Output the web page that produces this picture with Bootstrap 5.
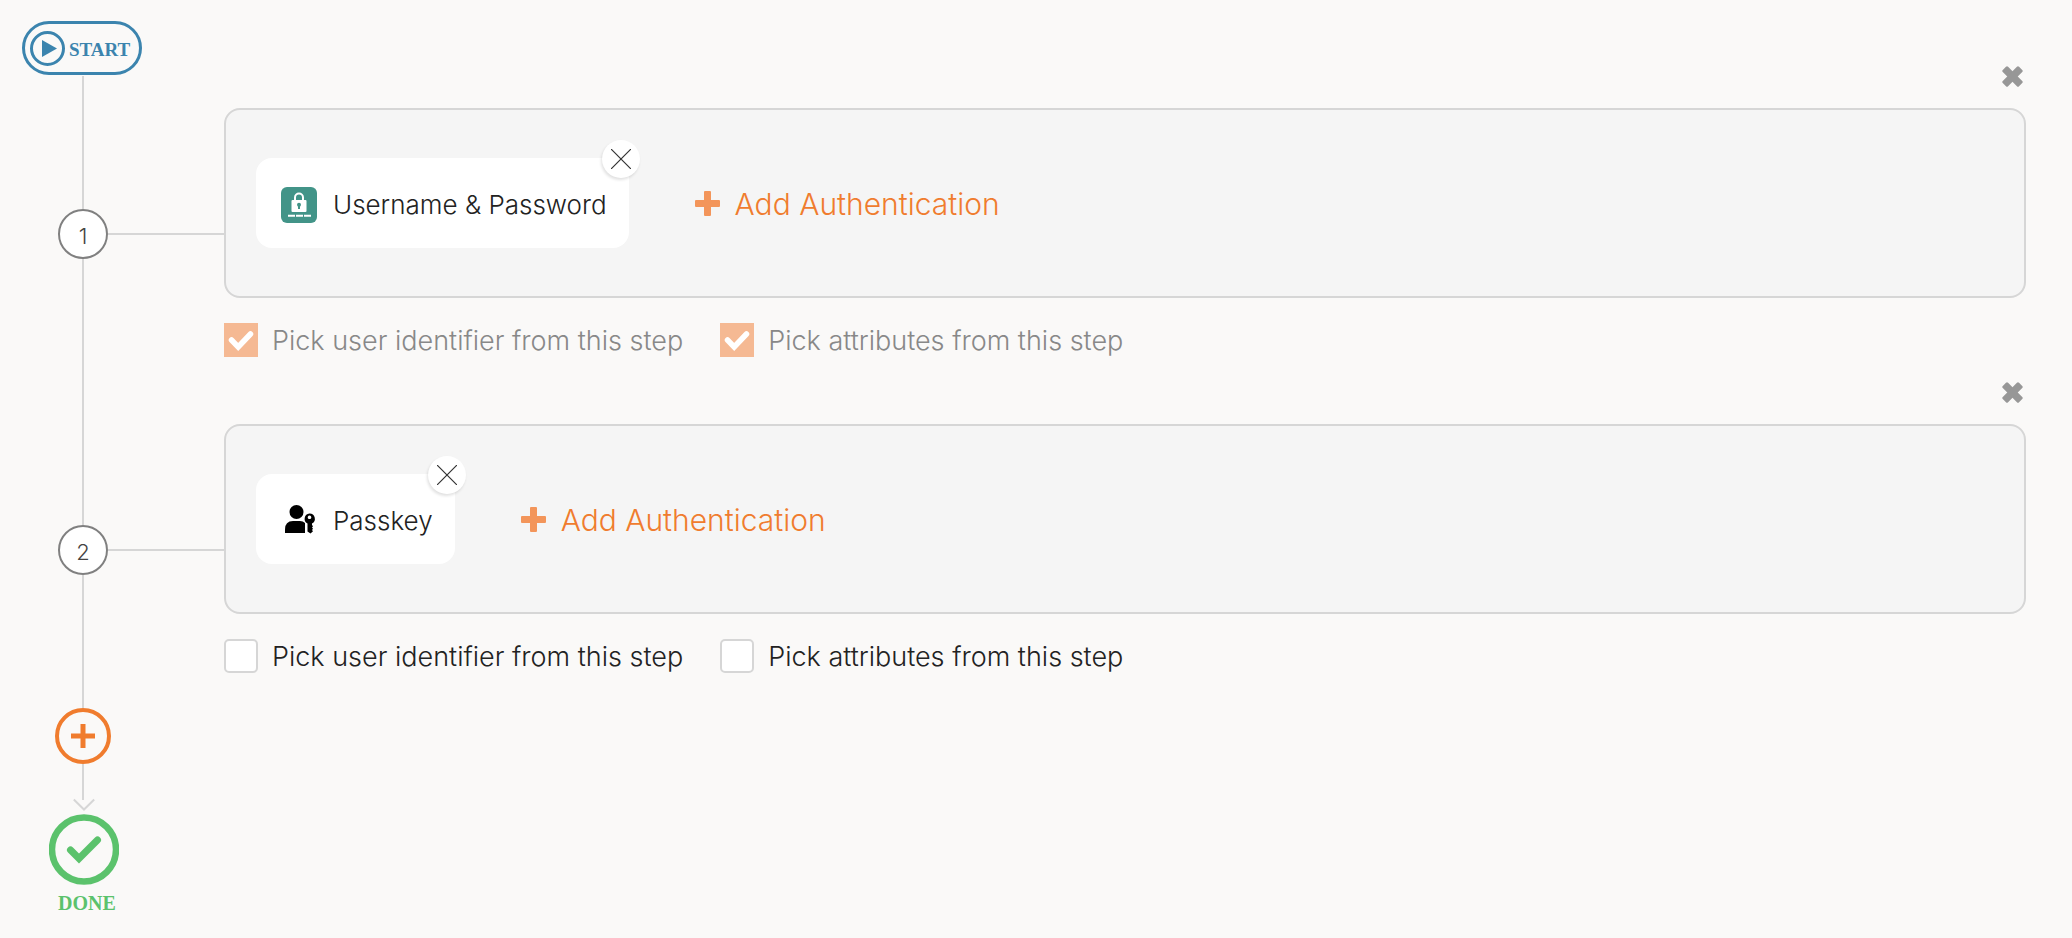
<!DOCTYPE html>
<html lang="en">
<head>
<meta charset="utf-8">
<meta name="viewport" content="width=device-width, initial-scale=1">
<title>Authentication flow</title>
<link href="https://cdn.jsdelivr.net/npm/bootstrap@5.3.0/dist/css/bootstrap.min.css" rel="stylesheet">
<style>
  :root { --line: #d6d6d6; --accent: #f07c2e; --page: #faf9f8; }
  body { background: var(--page); color: #222; font-family: Inter, "Liberation Sans", sans-serif; font-weight: 300; font-size: 26px; line-height: 34px; }
  svg { display: block; }
  .flow { padding: 21px 46px 24px 0; }
  .rail { width: 224px; flex: none; }
  .v-line { width: 2px; margin-left: 82px; background: var(--line); }
  .v-first { height: 133px; margin-top: 1px; }
  .v-lead { height: 143px; }
  .v-short { height: 10px; }
  .v-last { height: 36px; }
  .h-line { height: 2px; background: var(--line); }
  .start-pill { width: 120px; height: 54px; margin-left: 22px; padding-left: 5px; gap: 4px; border: 3px solid #3b84ae; border-radius: 27px; color: #3b84ae; }
  .serif-cap { font-family: "Liberation Serif", serif; font-weight: 700; line-height: 24px; }
  .start-cap { font-size: 19px; padding-top: 3px; }
  .done-cap { font-size: 20px; color: #5bc26c; margin: 6px 0 0 58px; }
  .node-row { padding-left: 58px; }
  .node { width: 50px; height: 50px; border: 2px solid #808080; background: #fff; color: #444; font-size: 22px; padding-top: 3px; }
  .first-content { padding-top: 45px; }
  .step-content { padding-bottom: 25px; }
  .bare { border: 0; padding: 0; background: none; }
  .remove-step { color: #979797; margin: 0 3px 21px 0; }
  .auth-box { height: 190px; padding: 0 30px; gap: 66px; border: 2px solid var(--line); border-radius: 16px; background: #f5f5f5; }
  .chip { height: 90px; padding: 4px 22px 0 25px; gap: 16px; border-radius: 16px; background: #fff; }
  .chip-close { top: -18px; right: -11px; width: 38px; height: 38px; background: #fff; box-shadow: -1px 2px 3px rgba(0,0,0,.12); }
  .add-auth { color: var(--accent); font-size: 30px; font-weight: 300; gap: 15px; }
  .add-auth span, .checks span { padding-top: 2px; }
  .checks { height: 34px; margin-top: 25px; gap: 37px; }
  .checks label { gap: 14px; font-size: 27px; }
  .checks .form-check-input { width: 34px; height: 34px; margin: 0; border: 2px solid var(--line); border-radius: 5px; background-color: #fff; }
  .checks .form-check-input:disabled, .checks .form-check-input:disabled ~ span { opacity: 1; }
  .checks .form-check-input:checked { border: 0; border-radius: 0; background-color: #f5b993; background-size: 34px 34px;
    background-image: url("data:image/svg+xml,%3Csvg xmlns='http://www.w3.org/2000/svg' viewBox='0 0 34 34'%3E%3Cpath d='M7.5 17l6.700 7L26.500 11' fill='none' stroke='%23fff' stroke-width='5.500' stroke-linejoin='miter' stroke-linecap='round'/%3E%3C/svg%3E"); }
  .is-locked { color: #888; }
  .add-step { margin-left: 55px; }
  .arrow-head { margin: -2px 0 2px 73px; }
  .done-mark { margin-left: 49px; }
</style>
</head>
<body>
<main class="flow">
  <section class="d-flex">
    <div class="rail d-flex flex-column">
      <div class="start-pill d-flex align-items-center">
        <svg width="35" height="35" viewBox="0 0 35 35" aria-hidden="true"><circle cx="17.500" cy="17.500" r="16" fill="none" stroke="currentColor" stroke-width="3"/><path d="M12 9l15 8.500L12 26z" fill="currentColor"/></svg>
        <span class="serif-cap start-cap">START</span>
      </div>
      <div class="v-line v-first"></div>
      <div class="node-row d-flex align-items-center">
        <div class="node rounded-circle d-flex align-items-center justify-content-center">1</div>
        <div class="h-line flex-grow-1"></div>
      </div>
      <div class="v-line flex-grow-1"></div>
    </div>
    <div class="first-content step-content flex-grow-1 d-flex flex-column">
      <button type="button" class="bare remove-step align-self-end" aria-label="Remove step 1">
        <svg width="21" height="21" viewBox="0 0 21 21"><g transform="rotate(45 10.500 10.500)" fill="currentColor"><rect x="-1" y="6.750" width="23" height="7.500" rx="1.500"/><rect x="6.750" y="-1" width="7.500" height="23" rx="1.500"/></g></svg>
      </button>
      <div class="auth-box d-flex align-items-center">
        <div class="chip position-relative d-flex align-items-center">
          <svg width="36" height="36" viewBox="0 0 36 36" aria-hidden="true"><rect width="36" height="36" rx="6" fill="#429488"/><path d="M14 14v-3.500a4 4 0 0 1 8 0V14" fill="none" stroke="#fff" stroke-width="2"/><rect x="10.500" y="13" width="15" height="12" rx="1" fill="#fff"/><circle cx="18" cy="17.800" r="2" fill="#429488"/><path d="M17 18h2v4h-2z" fill="#429488"/><path d="M7 28.700h7M15 28.700h7M23 28.700h7" stroke="#fff" stroke-width="2"/></svg>
          <span>Username &amp; Password</span>
          <button type="button" class="bare chip-close position-absolute rounded-circle d-flex align-items-center justify-content-center" aria-label="Remove Username &amp; Password">
            <svg width="20" height="20" viewBox="0 0 20 20"><path d="M0 0l20 20M20 0L0 20" stroke="#333" stroke-width="1.200"/></svg>
          </button>
        </div>
        <button type="button" class="bare add-auth d-flex align-items-center">
          <svg width="25" height="25" viewBox="0 0 25 25" aria-hidden="true"><path d="M10 0h5q1 0 1 1v8h8q1 0 1 1v5q0 1-1 1h-8v8q0 1-1 1h-5q-1 0-1-1v-8H1q-1 0-1-1v-5q0-1 1-1h8V1q0-1 1-1z" fill="#f3955a"/></svg>
          <span>Add Authentication</span>
        </button>
      </div>
      <div class="checks is-locked d-flex align-items-center">
        <label class="d-flex align-items-center"><input class="form-check-input" type="checkbox" checked disabled><span>Pick user identifier from this step</span></label>
        <label class="d-flex align-items-center"><input class="form-check-input" type="checkbox" checked disabled><span>Pick attributes from this step</span></label>
      </div>
    </div>
  </section>

  <section class="d-flex">
    <div class="rail d-flex flex-column">
      <div class="v-line v-lead"></div>
      <div class="node-row d-flex align-items-center">
        <div class="node rounded-circle d-flex align-items-center justify-content-center">2</div>
        <div class="h-line flex-grow-1"></div>
      </div>
      <div class="v-line flex-grow-1"></div>
    </div>
    <div class="step-content flex-grow-1 d-flex flex-column">
      <button type="button" class="bare remove-step align-self-end" aria-label="Remove step 2">
        <svg width="21" height="21" viewBox="0 0 21 21"><g transform="rotate(45 10.500 10.500)" fill="currentColor"><rect x="-1" y="6.750" width="23" height="7.500" rx="1.500"/><rect x="6.750" y="-1" width="7.500" height="23" rx="1.500"/></g></svg>
      </button>
      <div class="auth-box d-flex align-items-center">
        <div class="chip position-relative d-flex align-items-center">
          <svg width="36" height="36" viewBox="0 0 36 36" aria-hidden="true"><circle cx="15.500" cy="9" r="7"/><path d="M4 30v-3.500Q4 18 12 18h7q3 0 5 2v10z"/><path fill-rule="evenodd" d="M28.500 10.500a5.300 5.300 0 0 1 2.500 10v1.500l1 1.200-1 1.200 1 1.300-1 1.300 1 1.200-2.500 2.300-3-2v-8a5.300 5.300 0 0 1 2-10zm0 2a1.800 1.800 0 1 0 .01 0z"/></svg>
          <span>Passkey</span>
          <button type="button" class="bare chip-close position-absolute rounded-circle d-flex align-items-center justify-content-center" aria-label="Remove Passkey">
            <svg width="20" height="20" viewBox="0 0 20 20"><path d="M0 0l20 20M20 0L0 20" stroke="#333" stroke-width="1.200"/></svg>
          </button>
        </div>
        <button type="button" class="bare add-auth d-flex align-items-center">
          <svg width="25" height="25" viewBox="0 0 25 25" aria-hidden="true"><path d="M10 0h5q1 0 1 1v8h8q1 0 1 1v5q0 1-1 1h-8v8q0 1-1 1h-5q-1 0-1-1v-8H1q-1 0-1-1v-5q0-1 1-1h8V1q0-1 1-1z" fill="#f3955a"/></svg>
          <span>Add Authentication</span>
        </button>
      </div>
      <div class="checks d-flex align-items-center">
        <label class="d-flex align-items-center"><input class="form-check-input" type="checkbox"><span>Pick user identifier from this step</span></label>
        <label class="d-flex align-items-center"><input class="form-check-input" type="checkbox"><span>Pick attributes from this step</span></label>
      </div>
    </div>
  </section>

  <div class="rail d-flex flex-column align-items-start">
    <div class="v-line v-short"></div>
    <button type="button" class="bare add-step" aria-label="Add step">
      <svg width="56" height="56" viewBox="0 0 56 56"><circle cx="28" cy="28" r="26" fill="none" stroke="#f07c2e" stroke-width="4"/><path d="M16 28h24M28 16v24" stroke="#f07c2e" stroke-width="5"/></svg>
    </button>
    <div class="v-line v-last"></div>
    <svg class="arrow-head" width="22" height="14" viewBox="0 0 22 14" aria-hidden="true"><path d="M.8 1.500L11 11.500 21.200 1.500" fill="none" stroke="#d6d6d6" stroke-width="2"/></svg>
    <svg class="done-mark" width="70" height="71" viewBox="0 0 70 71" aria-hidden="true"><circle cx="35" cy="35.500" r="32" fill="none" stroke="#5bc26c" stroke-width="6.500"/><path d="M21.500 36l8.500 8.500L48.500 26" fill="none" stroke="#5bc26c" stroke-width="7" stroke-linecap="round"/></svg>
    <span class="serif-cap done-cap">DONE</span>
  </div>
</main>
<script src="https://cdn.jsdelivr.net/npm/bootstrap@5.3.0/dist/js/bootstrap.bundle.min.js"></script>
</body>
</html>
